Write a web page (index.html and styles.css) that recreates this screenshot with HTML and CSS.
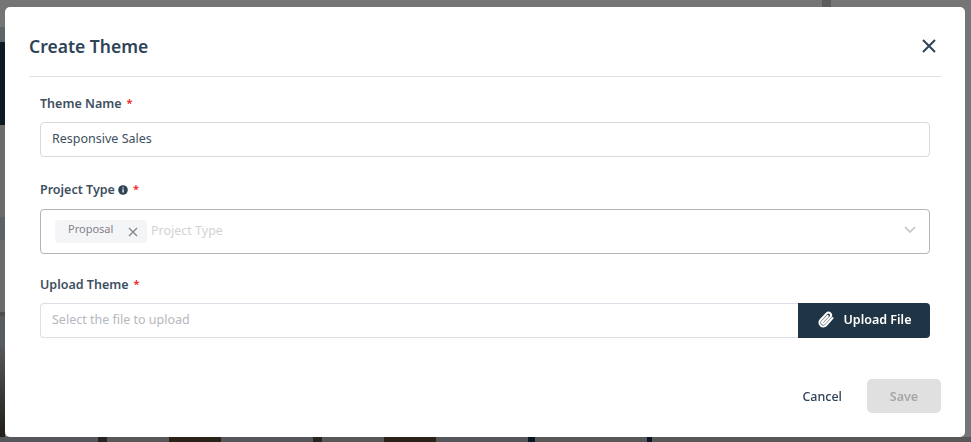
FILE: index.html
```html
<!DOCTYPE html>
<html lang="en">
<head>
<meta charset="utf-8">
<title>Create Theme</title>
<link rel="stylesheet" href="styles.css">
</head>
<body>
<div class="backdrop">
  <div class="bg-left">
    <span class="l1"></span><span class="l2"></span><span class="l3"></span><span class="l4"></span><span class="l5"></span><span class="l6"></span><span class="l7"></span><span class="l8"></span>
  </div>
  <div class="bg-top-mark"></div>
  <div class="bg-bottom">
    <span class="b1"></span><span class="d1"></span><span class="b2"></span><span class="d2"></span><span class="b3"></span><span class="d1"></span><span class="b2"></span><span class="d2"></span><span class="b3"></span><span class="d3"></span><span class="b4"></span><span class="d4"></span><span class="b5"></span>
  </div>
</div>
<main class="overlay">
  <section class="modal">
    <header class="modal-head">
      <h1 class="modal-title">Create Theme</h1>
      <button class="close" aria-label="Close">
        <svg viewBox="0 0 14 14" width="14" height="14"><path d="M1 1l12 12M13 1L1 13" fill="none" stroke="#2f4356" stroke-width="2"/></svg>
      </button>
    </header>
    <form class="form">
      <div class="field field-name">
        <label class="label">Theme Name <span class="req">*</span></label>
        <div class="input">Responsive Sales</div>
      </div>
      <div class="field field-type">
        <label class="label">Project Type
          <svg class="info" viewBox="0 0 10 10" width="10" height="10"><circle cx="5" cy="5" r="4.8" fill="#2f4356"/><rect x="4.4" y="4.3" width="1.3" height="3.2" fill="#fff"/><rect x="4.4" y="2.3" width="1.3" height="1.2" fill="#fff"/></svg>
          <span class="req">*</span></label>
        <div class="select">
          <span class="tag"><span class="tag-text">Proposal</span>
            <svg class="tag-x" viewBox="0 0 10 10" width="10" height="10"><path d="M1 1l8 8M9 1L1 9" fill="none" stroke="#7d858c" stroke-width="1.2"/></svg>
          </span>
          <span class="placeholder">Project Type</span>
          <svg class="chev" viewBox="0 0 12 7" width="12" height="7"><path d="M1 1l5 5 5-5" fill="none" stroke="#c4c4c4" stroke-width="1.6"/></svg>
        </div>
      </div>
      <div class="field field-upload">
        <label class="label">Upload Theme <span class="req">*</span></label>
        <div class="upload">
          <div class="upload-input">Select the file to upload</div>
          <button type="button" class="upload-btn">
            <svg class="clip" viewBox="0 0 24 24" width="18" height="18"><path d="M22 9.5l-8.6 9.4a5 5 0 0 1-7.4-6.8l8.2-8.9a3.4 3.4 0 0 1 5 4.6l-8.2 8.9a1.7 1.7 0 0 1-2.5-2.3l7.2-7.8" fill="none" stroke="#fff" stroke-width="2.8" stroke-linecap="round" stroke-linejoin="round"/></svg>
            <span>Upload File</span>
          </button>
        </div>
      </div>
    </form>
    <footer class="modal-foot">
      <button type="button" class="cancel">Cancel</button>
      <button type="button" class="save">Save</button>
    </footer>
  </section>
</main>
</body>
</html>
```
FILE: styles.css
```css
* { box-sizing: border-box; }
html, body { margin: 0; height: 100%; overflow: hidden; }
body { background: #757575; font-family: "Noto Sans", "Liberation Sans", sans-serif; color: #2f4356; }

.backdrop { position: fixed; inset: 0; }
.bg-left { position: absolute; left: 0; top: 27px; bottom: 0; width: 5px; display: flex; flex-direction: column; background: #6b6b6b; }
.bg-left span { display: block; }
.l1 { height: 15px; background: #5f6468; }
.l2 { height: 83px; background: #0c1a22; }
.l3 { height: 92px; background: #6b6b6b; }
.l4 { height: 23px; background: #5d6266; }
.l5 { height: 72px; background: #6b6b6b; }
.l6 { height: 4px; background: #4f4f4f; }
.l7 { height: 31px; background: #585c60; }
.l8 { flex: 1; background: linear-gradient(#55585a, #1e1a14); }
.bg-top-mark { position: absolute; left: 822px; top: 0; width: 9px; height: 7px; background: #5c5c5c; }
.bg-bottom { position: absolute; left: 0; right: 0; bottom: 0; height: 5px; display: flex; background: #585858; }
.bg-bottom span { display: block; height: 100%; }
.b1 { width: 98px; background: #55565c; }
.d1 { width: 9px; background: #2a2420; }
.b2 { width: 62px; background: #585858; }
.d2 { width: 52px; background: #2a2118; }
.b3 { width: 92px; background: #55565a; }
.d3 { width: 7px; background: #0b1524; }
.b4 { width: 112px; }
.d4 { width: 5px; background: #0b1524; }
.b5 { flex: 1; }

.overlay { position: fixed; inset: 0; padding: 7px 6px 5px 5px; display: flex; }
.modal { flex: 1; background: #fff; border-radius: 5px; padding: 0 24px; display: flex; flex-direction: column; }

.modal-head { height: 70px; padding-top: 8px; display: flex; align-items: center; justify-content: space-between; border-bottom: 1px solid #e2e2e2; }
.modal-title { margin: 0; font-size: 17.5px; font-weight: 600; line-height: 24px; color: #2f4356; }
.close { background: none; border: 0; padding: 0; margin-right: 5px; width: 14px; height: 14px; display: flex; }

.form { padding: 0 11px; flex: 1; }
.field { display: flex; flex-direction: column; }
.field-name { padding-top: 16px; }
.field-type { padding-top: 22px; }
.field-upload { padding-top: 20px; }
.label { height: 20px; padding-top: 2px; font-size: 12.5px; font-weight: 600; line-height: 18px; color: #3d4f60; display: flex; align-items: center; gap: 3px; margin-bottom: 9px; }
.field-type .label { margin-bottom: 10px; }
.req { color: #f01c1c; margin-left: 2px; font-size: 11px; line-height: 14px; margin-bottom: 2px; }
.input { height: 35px; border: 1px solid #d9d9d9; border-radius: 4px; padding: 0 11px 3px; display: flex; align-items: center; font-size: 12.5px; color: #3d4f60; }
.select { height: 45px; border: 1px solid #b4b4b4; border-radius: 4px; padding: 0 14px; display: flex; align-items: center; font-size: 12.5px; }
.tag { width: 92px; height: 23px; background: #f4f5f7; border-radius: 4px; display: flex; align-items: center; padding-left: 13px; margin-right: 4px; }
.tag-text { font-size: 11px; color: #85808e; position: relative; top: -3px; }
.tag-x { margin-left: auto; margin-right: 9px; }
.placeholder { color: #d2d2d2; margin-bottom: 3px; }
.chev { margin-left: auto; margin-right: -1px; margin-bottom: 4px; }

.upload { display: flex; height: 35px; }
.upload-input { flex: 1; border: 1px solid #dcdfe6; border-right: 0; border-radius: 4px 0 0 4px; padding: 0 11px 3px; display: flex; align-items: center; font-size: 12.5px; color: #b5b8bd; }
.upload-btn { width: 132px; padding: 0 0 2px; background: #1f3545; color: #fff; border: 0; border-radius: 0 4px 4px 0; display: flex; align-items: center; justify-content: center; gap: 10px; font: 600 12.5px "Noto Sans", "Liberation Sans", sans-serif; }
.clip { margin-left: -1px; }

.modal-foot { display: flex; justify-content: flex-end; align-items: center; gap: 25px; padding-bottom: 24px; }
.cancel { background: none; border: 0; padding: 0; font: 500 12.5px "Noto Sans", "Liberation Sans", sans-serif; color: #2f4356; }
.save { width: 74px; height: 34px; background: #e0e0e0; border: 0; border-radius: 5px; color: #a6a6a6; font: 600 12.5px "Noto Sans", "Liberation Sans", sans-serif; }
```
